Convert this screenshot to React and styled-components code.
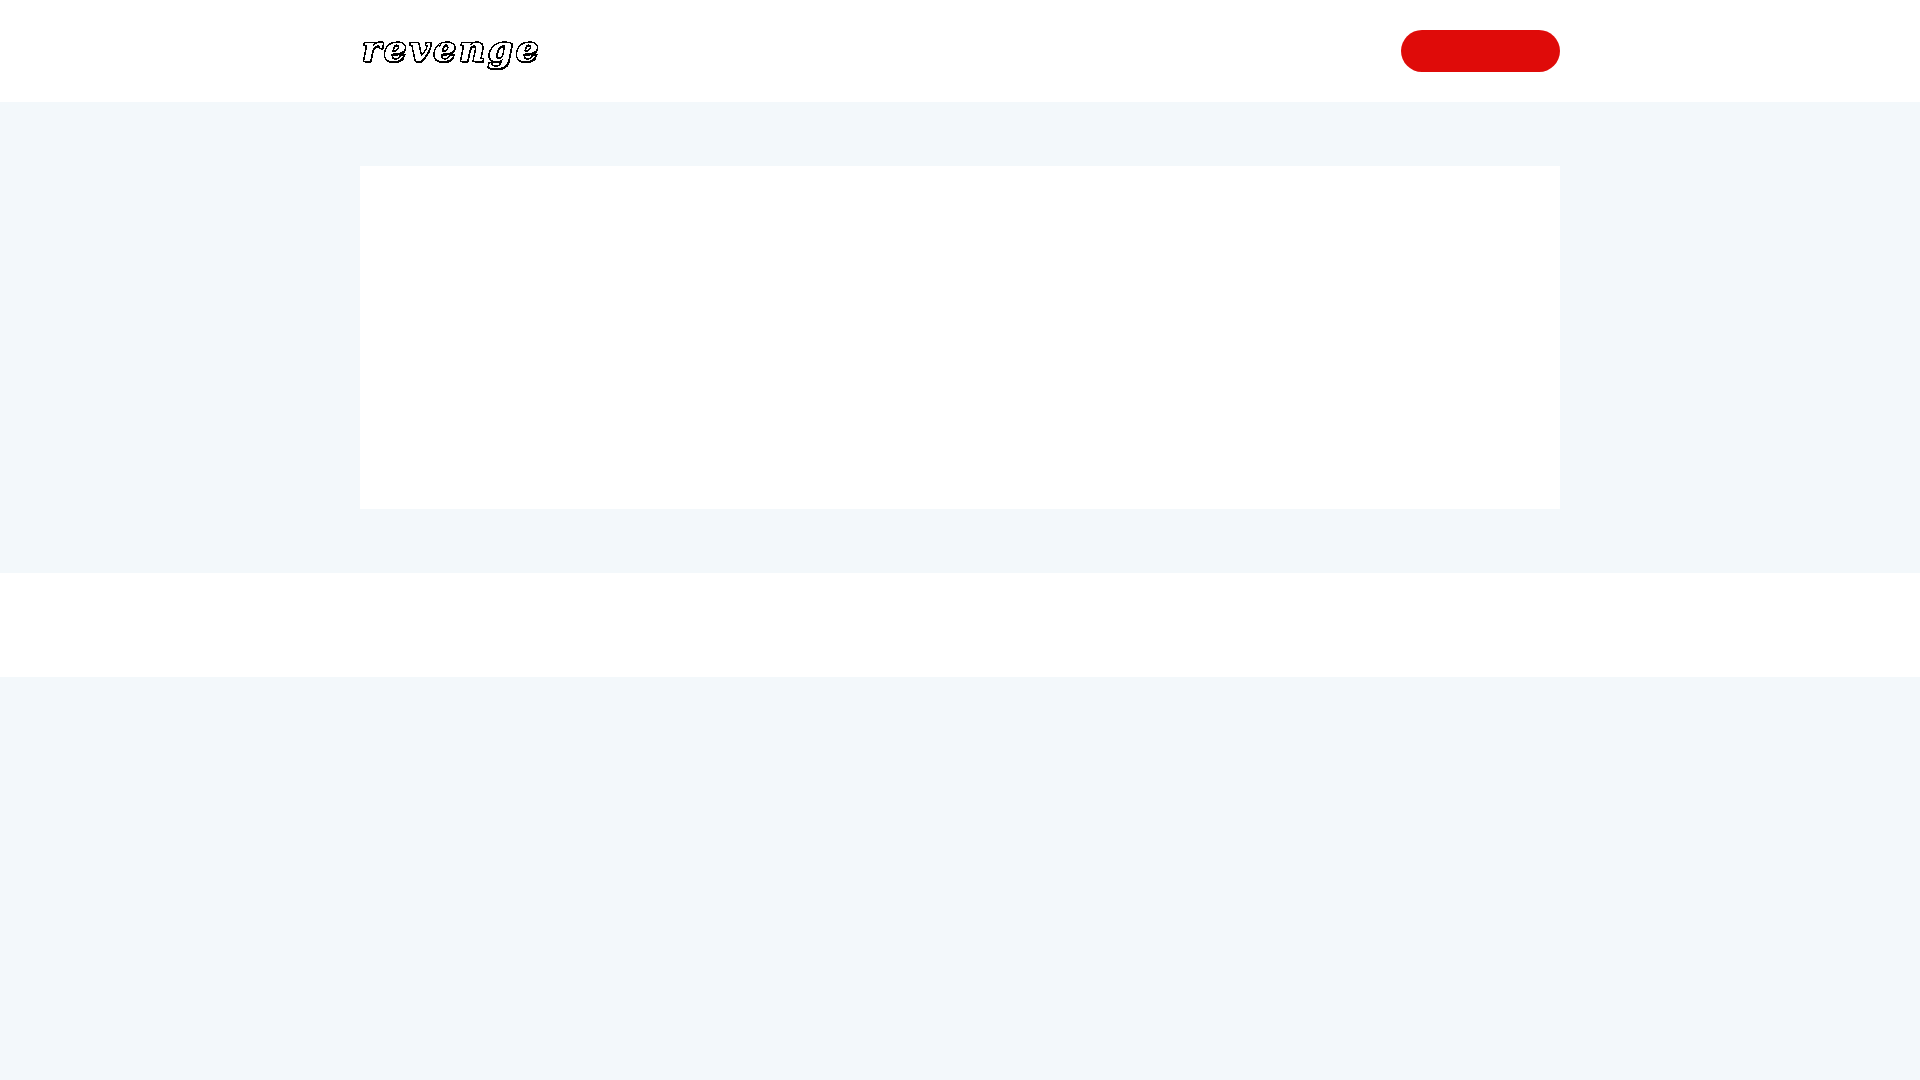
import React from 'react';
import styled, { createGlobalStyle } from 'styled-components';

const GlobalStyle = createGlobalStyle`
html, body {
  margin: 0;
  padding: 0;
  background-color: #f3f8fb;
  font-family: "Liberation Sans", Arial, sans-serif;
}
`;

const Page = styled.div`
min-height: 1080px;
display: flex;
flex-direction: column;
`;

const Header = styled.header`
height: 102px;
background-color: #fff;
display: flex;
justify-content: center;
align-items: center;
`;

const HeaderInner = styled.div`
width: 1200px;
display: flex;
justify-content: space-between;
align-items: center;
`;

const Logo = styled.div`
font-family: "DejaVu Serif", serif;
font-style: italic;
font-weight: 700;
font-size: 36px;
line-height: 42px;
letter-spacing: 2.8px;
padding: 0 0 6px 2px;
color: #fff;
-webkit-text-stroke: 2.6px #000;
paint-order: stroke fill;
text-shadow: 1px 2px 0 #000;
filter: url(#logo-rough);
`;

const RedButton = styled.button`
width: 159px;
height: 42px;
border: 0;
border-radius: 21px;
padding: 0;
background-color: #df0b09;
`;

const Hero = styled.section`
padding: 64px 0;
display: flex;
justify-content: center;
`;

const Panel = styled.div`
width: 1200px;
height: 343px;
background-color: #fff;
`;

const Band = styled.div`
height: 104px;
background-color: #fff;
`;

const HiddenDefs = styled.svg`
position: absolute;
width: 0;
height: 0;
`;

function App() {
  return (
    <Page>
      <GlobalStyle />
      <HiddenDefs aria-hidden="true">
        <filter id="logo-rough" x="-5%" y="-20%" width="110%" height="140%">
          <feTurbulence type="fractalNoise" baseFrequency="0.18" numOctaves="1" seed="4" result="noise" />
          <feDisplacementMap in="SourceGraphic" in2="noise" scale="2" result="moved" />
          <feComponentTransfer>
            <feFuncA type="discrete" tableValues="0 1" />
            <feFuncR type="discrete" tableValues="0 1" />
            <feFuncG type="discrete" tableValues="0 1" />
            <feFuncB type="discrete" tableValues="0 1" />
          </feComponentTransfer>
        </filter>
      </HiddenDefs>
      <Header>
        <HeaderInner>
          <Logo>revenge</Logo>
          <RedButton />
        </HeaderInner>
      </Header>
      <Hero>
        <Panel />
      </Hero>
      <Band />
    </Page>
  );
}

export default App;
